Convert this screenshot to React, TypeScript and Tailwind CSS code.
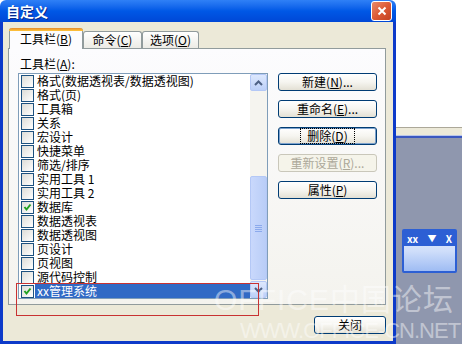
import type { FC, ReactNode } from 'react';

type ToolbarItem = { label: string; checked: boolean; selected?: boolean };

const toolbarItems: ToolbarItem[] = [
	{ label: '格式(数据透视表/数据透视图)', checked: false },
	{ label: '格式(页)', checked: false },
	{ label: '工具箱', checked: false },
	{ label: '关系', checked: false },
	{ label: '宏设计', checked: false },
	{ label: '快捷菜单', checked: false },
	{ label: '筛选/排序', checked: false },
	{ label: '实用工具 1', checked: false },
	{ label: '实用工具 2', checked: false },
	{ label: '数据库', checked: true },
	{ label: '数据透视表', checked: false },
	{ label: '数据透视图', checked: false },
	{ label: '页设计', checked: false },
	{ label: '页视图', checked: false },
	{ label: '源代码控制', checked: false },
	{ label: 'xx管理系统', checked: true, selected: true },
];

const fontStack = { fontFamily: '"Noto Sans CJK SC", "Liberation Sans", sans-serif' };

// XP-style checkbox with a green tick
const CheckBox: FC<{ checked: boolean }> = function CheckBox({ checked }) {
	return (
		<div className="h-[13px] w-[13px] shrink-0 border border-[#1c5180] bg-gradient-to-br from-[#dcdcd7] to-white">
			{checked ? (
				<svg viewBox="0 0 11 11" className="h-[11px] w-[11px]">
					<path d="M2.5 5 L4.5 7.5 L8.5 2.5" fill="none" stroke="#21a121" strokeWidth="2" />
				</svg>
			) : undefined}
		</div>
	);
};

const XpButton: FC<{
	children: ReactNode;
	disabled?: boolean;
	focused?: boolean;
	className?: string;
}> = function XpButton({ children, disabled, focused, className = 'w-[99px]' }) {
	return (
		<div
			className={`flex h-[18px] items-center justify-center rounded-[3px] border text-[12px] leading-[14px] ${className} ${
				disabled
					? 'border-[#c9c7ba] bg-[#f5f4ea] text-[#aca899]'
					: 'border-[#003c74] bg-gradient-to-b from-white via-[#f6f5f0] to-[#e3e0d4] text-black'
			} ${focused ? 'shadow-[inset_0_0_0_1px_#7da2ce]' : ''}`}
		>
			<span className={focused ? 'px-[6px] outline outline-1 outline-dotted outline-black' : ''}>
				{children}
			</span>
		</div>
	);
};

const ScrollBar: FC = function ScrollBar() {
	return (
		<div className="flex w-[17px] shrink-0 flex-col bg-[#f5f4ef]">
			<div className="flex h-[17px] items-center justify-center rounded-[2px] border border-[#b4c8f6] bg-gradient-to-b from-[#dde8fd] to-[#bcd0f8]">
				<svg viewBox="0 0 9 6" className="h-[6px] w-[9px]">
					<path d="M1 5 L4.5 1.5 L8 5" fill="none" stroke="#4d6185" strokeWidth="2" />
				</svg>
			</div>
			<div className="h-[85px]" />
			<div className="flex h-[104px] items-center justify-center rounded-[2px] border border-[#b4c8f6] bg-gradient-to-r from-[#c9d8fc] to-[#b9cdf7]">
				<div className="flex flex-col gap-[1px]">
					<div className="h-[1px] w-[7px] bg-[#8caaec]" />
					<div className="h-[1px] w-[7px] bg-[#8caaec]" />
					<div className="h-[1px] w-[7px] bg-[#8caaec]" />
					<div className="h-[1px] w-[7px] bg-[#8caaec]" />
				</div>
			</div>
			<div className="h-[1px]" />
			<div className="flex h-[17px] items-center justify-center rounded-[2px] border border-[#b4c8f6] bg-gradient-to-b from-[#dde8fd] to-[#bcd0f8]">
				<svg viewBox="0 0 9 6" className="h-[6px] w-[9px]">
					<path d="M1 1 L4.5 4.5 L8 1" fill="none" stroke="#4d6185" strokeWidth="2" />
				</svg>
			</div>
		</div>
	);
};

const Tab: FC<{ children: ReactNode; active?: boolean; width: string }> = function Tab({
	children,
	active,
	width,
}) {
	return active ? (
		<div
			className={`relative z-10 -mb-[1px] flex h-[21px] flex-col rounded-t-[3px] border-x border-[#919b9c] bg-[#fcfcfe] ${width}`}
		>
			<div className="-mx-[1px] h-[3px] rounded-t-[3px] bg-gradient-to-b from-[#e68b2c] to-[#ffc73c]" />
			<div className="flex flex-1 items-center justify-center pb-[2px] text-[12px] leading-[14px]">
				{children}
			</div>
		</div>
	) : (
		<div
			className={`flex h-[17px] items-center justify-center rounded-t-[3px] border-x border-t border-[#919b9c] bg-gradient-to-b from-white to-[#ecebe5] text-[12px] leading-[14px] ${width}`}
		>
			{children}
		</div>
	);
};

const CustomizeDialog: FC = function CustomizeDialog() {
	return (
		<div className="flex h-[344px] w-[396px] shrink-0 flex-col">
			<div className="flex h-[22px] items-center justify-between rounded-t-[6px] bg-gradient-to-b from-[#2f80f6] via-[#0058e6] to-[#0047d6] pl-[6px] pr-[4px]">
				<span className="text-[14px] font-bold leading-none text-white [text-shadow:1px_1px_0_#0a2a8a]">
					自定义
				</span>
				<div className="flex h-[20px] w-[21px] items-center justify-center rounded-[3px] border border-white bg-gradient-to-br from-[#ea8a6a] via-[#dd5a36] to-[#c2401f]">
					<svg viewBox="0 0 10 10" className="h-[10px] w-[10px]">
						<path d="M1.5 1.5 L8.5 8.5 M8.5 1.5 L1.5 8.5" stroke="white" strokeWidth="2" />
					</svg>
				</div>
			</div>
			<div className="flex flex-1 flex-col border-x-[3px] border-b-[3px] border-[#0d3ac9] bg-[#ece9d8] pl-[5px] pr-[7px] pt-[6px]">
				<div className="flex h-[20px] items-end pl-[1px]">
					<Tab active width="w-[74px]">
						工具栏(<u>B</u>)
					</Tab>
					<Tab width="w-[59px]">
						命令(<u>C</u>)
					</Tab>
					<Tab width="w-[57px]">
						选项(<u>O</u>)
					</Tab>
				</div>
				<div className="flex h-[257px] w-[378px] flex-col border border-[#919b9c] bg-gradient-to-b from-[#fcfcfe] to-[#f4f3ee] pl-[9px] pt-[8px]">
					<div className="ml-[2px] h-[16px] text-[12px] leading-[14px]">
						工具栏(<u>A</u>):
					</div>
					<div className="flex items-start">
						<div className="flex h-[226px] w-[250px] border border-[#7f9db9] bg-white">
							<div className="flex flex-1 flex-col pl-[2px]">
								{toolbarItems.map((item) => (
									<div key={item.label} className="flex h-[14px] items-center">
										<CheckBox checked={item.checked} />
										<div
											className={`ml-[1px] flex h-[14px] flex-1 items-center pl-[2px] text-[12px] leading-[14px] ${
												item.selected ? 'bg-[#316ac5] text-white' : 'text-black'
											}`}
										>
											{item.label}
										</div>
									</div>
								))}
							</div>
							<ScrollBar />
						</div>
						<div className="ml-[10px] flex flex-col gap-[9px]">
							<XpButton>
								新建(<u>N</u>)...
							</XpButton>
							<XpButton>
								重命名(<u>E</u>)...
							</XpButton>
							<XpButton focused>
								删除(<u>D</u>)
							</XpButton>
							<XpButton disabled>
								重新设置(<u>R</u>)...
							</XpButton>
							<XpButton>
								属性(<u>P</u>)
							</XpButton>
						</div>
					</div>
				</div>
				<div className="mt-[11px] flex justify-end">
					<XpButton className="w-[72px]">关闭</XpButton>
				</div>
			</div>
		</div>
	);
};

const FloatingToolbar: FC = function FloatingToolbar() {
	return (
		<div className="flex h-[44px] w-[55px] flex-col rounded-[2px] border-2 border-[#2c5fd4] bg-gradient-to-b from-[#e4edfd] via-[#cfdefa] to-[#9fbcf3]">
			<div className="flex h-[15px] items-center justify-between bg-[#2c5fd4] px-[3px] text-[10px] font-bold leading-none text-white">
				<span>xx</span>
				<span className="text-[9px]">▼</span>
				<span>X</span>
			</div>
		</div>
	);
};

export default function App() {
	return (
		<div className="relative flex h-[344px] w-[462px] overflow-hidden bg-white" style={fontStack}>
			<CustomizeDialog />
			<div className="flex flex-1 flex-col">
				<div className="h-[128px] border-b border-[#aca899] bg-white" />
				<div className="h-[8px] border-b border-[#b9c6ea] bg-[#ece9d8]" />
				<div className="flex flex-1 flex-col border-t-[2px] border-[#3a57c0] bg-[#8f97ae] pl-[6px] pt-[91px]">
					<FloatingToolbar />
				</div>
			</div>
			{/* Red highlight drawn around the custom toolbar row */}
			<div className="pointer-events-none absolute left-[16px] top-[283px] h-[33px] w-[243px] border border-[#c83232]" />
			{/* Forum watermark over the screenshot */}
			<div
				className="pointer-events-none absolute left-[214px] top-[281px] flex flex-col whitespace-nowrap text-white/45"
				style={{ fontFamily: '"Liberation Sans", "Noto Sans CJK SC", sans-serif' }}
			>
				<div className="text-[30px] leading-[38px] tracking-[1px]">OFFICE中国论坛</div>
				<div className="ml-[26px] text-[22px] leading-[24px] tracking-[-1px]">WWW.OFFICE-CN.NET</div>
			</div>
		</div>
	);
}
